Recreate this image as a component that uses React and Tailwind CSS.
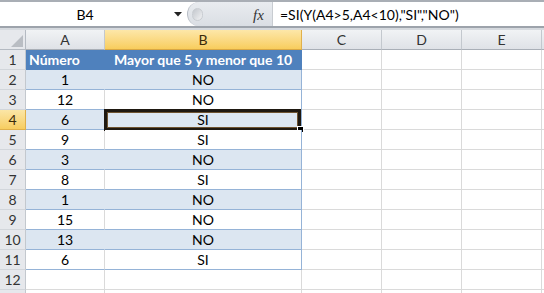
import React from 'react';

const data = [
  ['1', 'NO'],
  ['12', 'NO'],
  ['6', 'SI'],
  ['9', 'SI'],
  ['3', 'NO'],
  ['8', 'SI'],
  ['1', 'NO'],
  ['15', 'NO'],
  ['13', 'NO'],
  ['6', 'SI'],
];

const font = "font-['Lato',sans-serif]";

function RowHeader({ n, active }) {
  return (
    <div
      className={`w-[26px] shrink-0 h-full flex items-center justify-center border-r border-b text-[14px] ${
        active
          ? 'bg-gradient-to-b from-[#fbe6a6] to-[#f7cd5f] border-r-[#e0b04b] border-b-[#e0b04b] text-[#3a2a0a]'
          : 'bg-[#e6e8ec] border-r-[#c3c8ce] border-b-[#d2d6db] text-[#333]'
      }`}
    >
      {n}
    </div>
  );
}

function EmptyCells() {
  return (
    <>
      <div className="w-[80px] shrink-0 h-full border-r border-b border-[#dadada]" />
      <div className="w-[80px] shrink-0 h-full border-r border-b border-[#dadada]" />
      <div className="w-[80px] shrink-0 h-full border-r border-b border-[#dadada]" />
      <div className="flex-1 h-full border-b border-[#dadada]" />
    </>
  );
}

export default function App() {
  return (
    <div className={`w-[544px] h-[293px] overflow-hidden bg-white ${font} text-black select-none`}>
      {/* Formula bar */}
      <div className="h-[30px] flex flex-col">
        <div className="h-[2px] bg-[#a9aeb5]" />
        <div className="h-[24px] flex bg-white">
          <div className="w-[187px] shrink-0 flex items-center relative">
            <span className="w-[170px] text-center text-[14px]">B4</span>
            <svg width="8" height="5" viewBox="0 0 8 5" className="absolute left-[174px] top-[10px]">
              <path d="M0 0 H8 L4 4.5 Z" fill="#222" />
            </svg>
          </div>
          <div className="w-[85px] shrink-0 bg-gradient-to-b from-[#e9ecf0] to-[#dadee4] rounded-l-[12px] border-l border-[#b8bec6] flex items-center relative">
            <div className="ml-[4px] w-[11px] h-[13px] rounded-full bg-gradient-to-br from-[#c3c7cd] to-[#f1f2f4] border border-[#c9cdd2]" />
            <span className="absolute left-[65px] top-[2px] font-['Liberation_Serif',serif] italic text-[15px] text-[#333]">fx</span>
          </div>
          <div className="flex-1 border-l border-[#c8ccd1] flex items-center pl-[7px] text-[14px] whitespace-nowrap">
            =SI(Y(A4&gt;5,A4&lt;10),"SI","NO")
          </div>
        </div>
        <div className="h-[2px] bg-[#9da3ab]" />
        <div className="h-[2px] bg-[#d5d9de]" />
      </div>

      {/* Column headers */}
      <div className="flex h-[20px]">
        <div className="w-[26px] shrink-0 h-full bg-[#e6e8ec] border-r border-b border-[#b4bac2] flex items-end justify-end p-[2px]">
          <svg width="12" height="12" viewBox="0 0 12 12">
            <path d="M12 0 V12 H0 Z" fill="#b9bdc3" />
          </svg>
        </div>
        <div className="w-[79px] shrink-0 h-full bg-gradient-to-b from-[#f1f3f5] to-[#dfe2e7] border-r border-b border-r-[#c3c8ce] border-b-[#a9afb7] flex items-center justify-center text-[14px] text-[#333]">A</div>
        <div className="w-[197px] shrink-0 h-full bg-gradient-to-b from-[#fde7a8] to-[#f8cd5c] border-r border-b border-r-[#e0b04b] border-b-[#d9a844] flex items-center justify-center text-[14px] text-[#3a2a0a]">B</div>
        <div className="w-[80px] shrink-0 h-full bg-gradient-to-b from-[#f1f3f5] to-[#dfe2e7] border-r border-b border-r-[#c3c8ce] border-b-[#a9afb7] flex items-center justify-center text-[14px] text-[#333]">C</div>
        <div className="w-[80px] shrink-0 h-full bg-gradient-to-b from-[#f1f3f5] to-[#dfe2e7] border-r border-b border-r-[#c3c8ce] border-b-[#a9afb7] flex items-center justify-center text-[14px] text-[#333]">D</div>
        <div className="w-[80px] shrink-0 h-full bg-gradient-to-b from-[#f1f3f5] to-[#dfe2e7] border-r border-b border-r-[#c3c8ce] border-b-[#a9afb7] flex items-center justify-center text-[14px] text-[#333]">E</div>
        <div className="flex-1 h-full bg-gradient-to-b from-[#f1f3f5] to-[#dfe2e7] border-b border-[#a9afb7]" />
      </div>

      {/* Row 1: table header */}
      <div className="flex h-[20px]">
        <RowHeader n={1} />
        <div className="w-[79px] shrink-0 h-full bg-[#4f81bd] border-b border-[#4f81bd] flex items-center pl-[3px] text-[14px] font-bold text-white">Número</div>
        <div className="w-[197px] shrink-0 h-full bg-[#4f81bd] border-r border-b border-[#4f81bd] flex items-center justify-center text-[14px] font-bold text-white whitespace-nowrap">Mayor que 5 y menor que 10</div>
        <EmptyCells />
      </div>

      {/* Data rows */}
      {data.map(([a, b], i) => {
        const n = i + 2;
        const band = n % 2 === 0;
        const selected = n === 4;
        return (
          <div key={n} className="flex h-[20px]">
            <RowHeader n={n} active={selected} />
            <div
              className={`w-[79px] shrink-0 h-full border-r border-b border-b-[#95b3d7] flex items-center justify-center text-[14px] ${
                band ? 'bg-[#dce6f1] border-r-[#dce6f1]' : 'bg-white border-r-[#dadada]'
              }`}
            >
              {a}
            </div>
            <div
              className={`w-[197px] shrink-0 h-full border-r border-b border-[#95b3d7] flex items-center justify-center text-[14px] relative ${
                band ? 'bg-[#dce6f1]' : 'bg-white'
              }`}
            >
              {b}
              {selected && (
                <>
                  <div className="absolute left-[-1px] top-[-1px] right-0 bottom-[-2px] border-[3px] border-[#1e1811] shadow-[inset_0_0_0_1px_#6e5330]" />
                  <div className="absolute right-[-2px] bottom-[-3px] w-[5px] h-[5px] bg-black outline outline-1 outline-white" />
                </>
              )}
            </div>
            <EmptyCells />
          </div>
        );
      })}

      {/* Empty rows (row 13 is cut by the window edge, its number is not visible) */}
      {[12, 13].map((n) => (
        <div key={n} className="flex h-[20px]">
          <RowHeader n={n === 12 ? n : ''} />
          <div className="w-[79px] shrink-0 h-full border-r border-b border-[#dadada]" />
          <div className="w-[197px] shrink-0 h-full border-r border-b border-[#dadada]" />
          <EmptyCells />
        </div>
      ))}
    </div>
  );
}
